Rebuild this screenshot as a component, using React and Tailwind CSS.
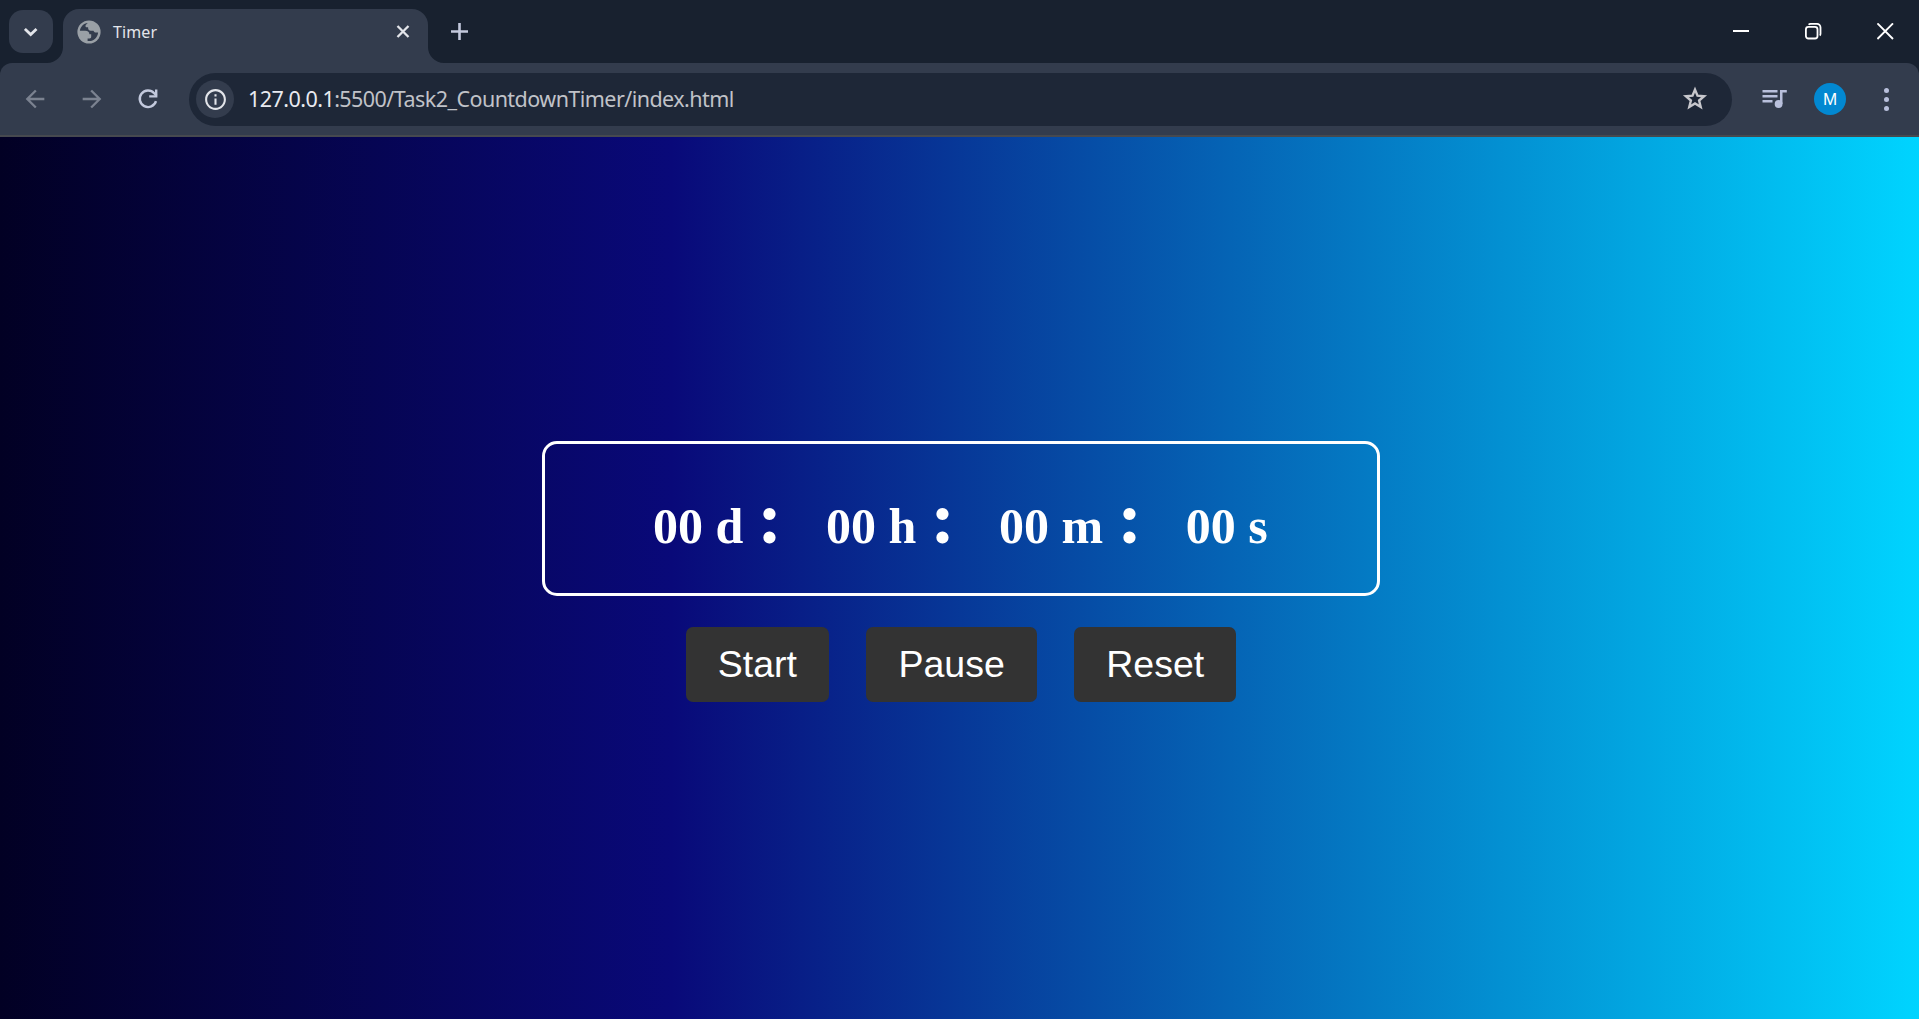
import React from "react";
import { MdArrowBack, MdArrowForward, MdInfoOutline } from "react-icons/md";

function Globe() {
  return (
    <svg className="h-6 w-6 shrink-0" viewBox="0 0 24 24">
      <circle cx="12" cy="12" r="11.6" fill="#9aa0a6" />
      <path
        d="M10.8 2.9C6.5 3.400 3.400 6.600 2.900 10.800h5.300c2.800 0 4.200 1.400 4.200 3.400h1.800v2.600c0 .9-.6 1.600-1.600 1.600h-2v2.500c4.900 1.100 9.900-2.400 10.500-8.400h-2.200c-1.400 0-1.900-.9-2.400-1.800h-2.700c-1.700 0-2.700-1.100-2.700-2.700V7.300H9.800c-.9 0-1.300-.6-1.300-1.400C8.500 4.500 9.700 4 10.800 2.900z"
        fill="#333c4d"
      />
    </svg>
  );
}

function TabStrip() {
  return (
    <header className="flex h-[63px] bg-[#18212f]">
      <button className="mt-[10px] ml-[9px] flex h-[43px] w-[44px] items-center justify-center rounded-[14px] bg-[#333c4d]">
        <svg className="h-[14px] w-[14px]" viewBox="0 0 14 14" fill="none" stroke="#e3e5ea" strokeWidth="2.8">
          <path d="M.9 3.900l5.800 5.600 5.800-5.600" />
        </svg>
      </button>
      <div className="relative mt-[9px] ml-[10px] flex w-[365px] items-start rounded-t-[16px] bg-[#333c4d]">
        <svg className="absolute bottom-0 -left-4 h-4 w-4" viewBox="0 0 16 16" fill="#333c4d">
          <path d="M16 0A16 16 0 0 1 0 16h16z" />
        </svg>
        <svg className="absolute -right-4 bottom-0 h-4 w-4" viewBox="0 0 16 16" fill="#333c4d">
          <path d="M0 0a16 16 0 0 0 16 16H0z" />
        </svg>
        <div className="mt-[11px] flex h-6 w-full items-center pl-[14px]">
          <Globe />
          <span className="ml-[12px] flex-1 pb-px font-['Noto_Sans'] text-[16px] leading-[22px] tracking-[0.1px] text-[#e3e5ea]">
            Timer
          </span>
          <svg className="mr-[18px] h-[14px] w-[14px]" viewBox="0 0 14 14" fill="none" stroke="#e3e5ea" strokeWidth="2.3">
            <path d="M1.500 1l11 11M12.500 1l-11 11" />
          </svg>
        </div>
      </div>
      <svg className="mt-[23px] ml-[23px] h-[17px] w-[17px]" viewBox="0 0 17 17" fill="none" stroke="#c3c9dd" strokeWidth="2.6">
        <path d="M8.500 0v17M0 8.500h17" />
      </svg>
      <div className="mt-[23px] mr-[25px] ml-auto flex h-[17px] gap-[55px]">
        <svg className="h-[17px] w-[17px]" viewBox="0 0 17 17" stroke="#fff" strokeWidth="2">
          <path d="M0 8h16" />
        </svg>
        <svg className="h-[17px] w-[17px]" viewBox="0 0 17 17" fill="none" stroke="#fff" strokeWidth="1.8">
          <rect x=".9" y="3.9" width="11.6" height="11.6" rx="2.5" />
          <path d="M3.700 1.700C4.100 1.100 4.800.9 5.500.9H12A3.500 3.500 0 0 1 15.500 4.400V10.700c0 .7-.2 1.400-.8 1.800" />
        </svg>
        <svg className="h-[17px] w-[17px]" viewBox="0 0 17 17" stroke="#fff" strokeWidth="1.9">
          <path d="M.4.400l15.600 15.600M16 .400L.400 16" />
        </svg>
      </div>
    </header>
  );
}

function QueueMusic() {
  return (
    <svg className="ml-[29px] h-[20px] w-[26px]" viewBox="0 0 26 20" fill="#b9c0dc">
      <path d="M1.500 1h15v2.400h-15zM1.500 6h15v2.400h-15zM1.500 11h10v2.400h-10zM19 1h6.800v2.500h-4.300v11.500H19z" />
      <circle cx="17.6" cy="15" r="3.9" />
    </svg>
  );
}

function Star() {
  return (
    <svg className="h-[28px] w-[28px]" viewBox="0 0 28 28" fill="none" stroke="#c7c7cc" strokeWidth="2.4">
      <path d="M14 4.600l2.500 6.100 6.600.5-5 4.300 1.600 6.500L14 18.500l-5.700 3.500 1.600-6.500-5-4.300 6.600-.5z" />
    </svg>
  );
}

function Toolbar() {
  return (
    <div className="bg-[#18212f]">
      <div className="flex h-[74px] items-center rounded-t-[12px] border-b-2 border-[#46494f] bg-[#333c4d]">
        <MdArrowBack className="ml-[21px] h-[28px] w-[28px] text-[#7b8290]" />
        <MdArrowForward className="ml-[29px] h-[28px] w-[28px] text-[#7b8290]" />
        <svg className="ml-[30px] h-6 w-6" viewBox="0 0 24 24">
          <path d="M20 14.200A8.300 8.300 0 1 1 18.200 6.200l2.300 2.600" fill="none" stroke="#c3c9dd" strokeWidth="2.4" />
          <path d="M19 2.400h2.400v8.200h-8.200V8.200H19z" fill="#c3c9dd" />
        </svg>
        <div className="ml-[29px] flex h-[53px] w-[1543px] items-center rounded-full bg-[#1e2737] pr-[23px] pl-[7px]">
          <div className="flex h-[38px] w-[38px] items-center justify-center rounded-full bg-[#333c4d]">
            <MdInfoOutline className="h-[25px] w-[25px] text-[#e3e5ea]" />
          </div>
          <p className="ml-[14px] flex-1 font-['Noto_Sans'] text-[21.5px] tracking-[-0.55px] text-[#c0c2c8]">
            <span className="text-[#e8eaf0]">127.0.0.1</span>:5500/Task2_CountdownTimer/index.html
          </p>
          <Star />
        </div>
        <QueueMusic />
        <div className="ml-[27px] flex h-8 w-8 items-center justify-center rounded-full bg-[#0288d1] pt-px font-['Liberation_Sans'] text-[17px] font-normal text-white">
          M
        </div>
        <div className="ml-[38px] flex w-[6px] flex-col gap-[4px]">
          <i className="h-[5px] w-[5px] rounded-full bg-[#b9c0dc]" />
          <i className="h-[5px] w-[5px] rounded-full bg-[#b9c0dc]" />
          <i className="h-[5px] w-[5px] rounded-full bg-[#b9c0dc]" />
        </div>
      </div>
    </div>
  );
}

const units = ["d", "h", "m", "s"];

function Countdown() {
  return (
    <div className="flex h-[155px] w-[838px] items-baseline rounded-[15px] border-[3px] border-white pt-[36px] pl-[108px] font-['Liberation_Serif'] font-bold whitespace-nowrap text-white">
      {units.map((u, i) => (
        <React.Fragment key={u}>
          <span className="text-[50px] leading-[75px]">00 {u}</span>
          {i < 3 && <span className="mr-[43.7px] ml-[14px] text-[75px] leading-[75px]">:</span>}
        </React.Fragment>
      ))}
    </div>
  );
}

function ControlButton({ children }) {
  return (
    <button className="h-[75px] rounded-[7px] bg-[#333] px-[32px] font-['Liberation_Sans'] text-[37.5px] leading-[75px] text-white">
      {children}
    </button>
  );
}

export default function App() {
  return (
    <div className="flex h-[1019px] w-[1919px] flex-col overflow-hidden">
      <TabStrip />
      <Toolbar />
      <main className="flex flex-1 flex-col items-center bg-[linear-gradient(90deg,#020024_0%,#090979_35%,#00d4ff_100%)] pt-[304px] pl-[3px]">
        <Countdown />
        <div className="mt-[31px] flex gap-[37.5px]">
          <ControlButton>Start</ControlButton>
          <ControlButton>Pause</ControlButton>
          <ControlButton>Reset</ControlButton>
        </div>
      </main>
    </div>
  );
}
